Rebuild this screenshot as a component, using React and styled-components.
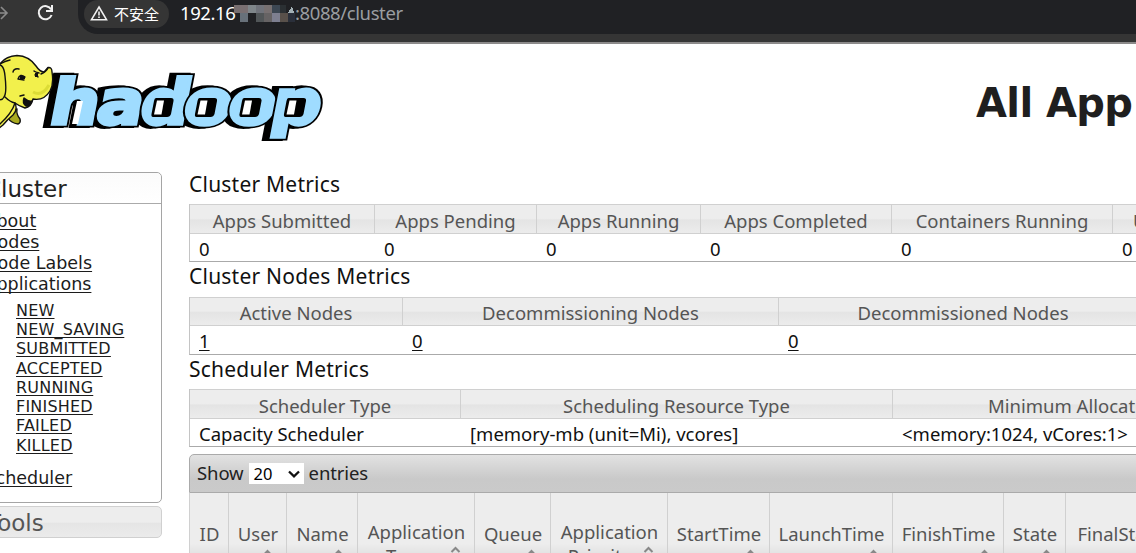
import React from "react";
import styled, { createGlobalStyle } from "styled-components";

const Global = createGlobalStyle`
  * { box-sizing: border-box; }
  html, body { margin: 0; padding: 0; overflow: hidden; background: #fff; }
  body { font-family: "Noto Sans", "Noto Sans CJK SC", sans-serif; color: #1c1c1c; }
`;

const Page = styled.div`
  width: 1136px;
  height: 553px;
  overflow: hidden;
  background: #fff;
`;

const BrowserBar = styled.div`
  display: flex;
  height: 44px;
  background: #353535;
  border-bottom: 2px solid #8c8a8a;
`;

const NavIcons = styled.div`
  width: 78px;
  flex: none;
`;

const AddressBar = styled.div`
  flex: 1;
  display: flex;
  height: 34px;
  padding-left: 6px;
  background: #202124;
  border-radius: 0 0 0 20px;
`;

const SecurityChip = styled.div`
  display: flex;
  width: 85px;
  height: 28px;
  padding: 0 0 0 6px;
  gap: 6px;
  background: #353535;
  border-radius: 14px;
  color: #fff;
  font: 15px/28px "Noto Sans CJK SC", sans-serif;
  white-space: nowrap;
`;

const Url = styled.div`
  display: flex;
  margin-left: 11px;
  font-size: 18.5px;
  line-height: 26px;
  letter-spacing: -0.4px;
  white-space: nowrap;
`;

const Host = styled.span`
  width: 54px;
  color: #fff;
`;

const UrlRest = styled.span`
  color: #9a9da1;
`;

const Banner = styled.header`
  display: flex;
  justify-content: space-between;
  height: 128px;
`;

const Title = styled.h1`
  margin: 0 3px 0 0;
  width: 157px;
  padding-top: 35px;
  font: bold 40px/48px "DejaVu Sans", sans-serif;
  letter-spacing: -0.6px;
  white-space: nowrap;
  overflow: hidden;
  color: #1f1f1f;
`;

const Body = styled.div`
  display: flex;
  gap: 27px;
`;

const Sidebar = styled.nav`
  width: 162px;
  flex: none;
  overflow: hidden;
  font-family: "DejaVu Sans", sans-serif;
`;

const Panel = styled.section`
  width: 202px;
  height: 331px;
  margin-left: -40px;
  border: 1px solid #a5a5a5;
  border-radius: 5px;
`;

const PanelTitle = styled.h3`
  margin: 0;
  height: 31px;
  padding-left: 24px;
  font-weight: normal;
  font-size: 23px;
  line-height: 32px;
  color: #222;
  border-bottom: 1px solid #aaa;
  background: linear-gradient(#fbfbfb, #fff);
  border-radius: 5px 5px 0 0;
`;

const ClosedPanel = styled(PanelTitle)`
  width: 202px;
  height: 32px;
  margin: 3px 0 0 -40px;
  padding-left: 26px;
  border: 1px solid #d0d0d0;
  border-radius: 5px;
  color: #555;
  background: linear-gradient(#ededed 50%, #e5e5e5 55%, #ebebeb);
`;

const Menu = styled.ul`
  list-style: none;
  margin: 0;
  padding: ${(p) => p.$top}px 0 0 ${(p) => p.$indent}px;
`;

const MenuItem = styled.li`
  height: 21.3px;
  line-height: 21px;
  font-size: 17.5px;
  margin-top: ${(p) => p.$gap || 0}px;
  white-space: nowrap;
  text-decoration: underline;
  text-underline-offset: 2px;
  text-decoration-thickness: 1px;
  text-decoration-skip-ink: none;
`;

const SubItem = styled.li`
  height: 19.25px;
  line-height: 19px;
  font-size: 16px;
  letter-spacing: 0.2px;
  text-decoration: underline;
  text-underline-offset: 2px;
  text-decoration-thickness: 1px;
  text-decoration-skip-ink: none;
`;

const Content = styled.main`
  flex: 1;
  min-width: 0;
  overflow: hidden;
`;

const Heading = styled.h2`
  margin: 0;
  height: ${(p) => p.$h}px;
  font-size: 21px;
  font-weight: normal;
  line-height: ${(p) => p.$lh}px;
  letter-spacing: 0.22px;
  color: #111;
`;

const Grid = styled.div`
  display: grid;
  grid-template-columns: ${(p) => p.$cols};
  width: 1100px;
  height: 58px;
  grid-template-rows: ${(p) => p.$head}px 1fr;
  border-left: 1px solid #c4c4c4;
  border-bottom: 1px solid #aaa;
`;

const HeadCell = styled.div`
  display: flex;
  justify-content: ${(p) => (p.$start ? "flex-start" : "center")};
  padding-left: ${(p) => p.$start || 0}px;
  border: solid #d0d0d0;
  border-width: 1px 1px 1px 0;
  background: linear-gradient(#ededed 48%, #e4e4e4 54%, #ececec);
  color: #555;
  font-size: 18.5px;
  line-height: ${(p) => p.$lh}px;
  white-space: nowrap;
`;

const Cell = styled.div`
  padding-left: 9px;
  font-size: 18.5px;
  line-height: 29px;
  color: #111;
  white-space: nowrap;
  text-decoration: ${(p) => (p.$link ? "underline" : "none")};
  text-underline-offset: 2px;
  text-decoration-thickness: 1px;
`;

const Toolbar = styled.div`
  display: flex;
  align-items: center;
  gap: 5px;
  width: 1100px;
  height: 39px;
  margin-top: 7px;
  padding: 0 0 1px 7px;
  border: 1px solid #aaa;
  border-radius: 5px 5px 0 0;
  background: linear-gradient(#e2e2e2, #c9c9c9 65%, #cacaca);
  font-size: 18.5px;
  letter-spacing: -0.1px;
  line-height: 24px;
  color: #222;
`;

const Select = styled.span`
  display: flex;
  align-items: center;
  justify-content: space-between;
  width: 55px;
  height: 21px;
  margin-top: 1px;
  padding: 0 4px 0 5px;
  background: #fff;
  color: #000;
  font: 16.5px/21px "Noto Sans", sans-serif;
`;

const EntryHeader = styled.div`
  display: grid;
  grid-template-columns: 39px 58px 71px 117px 76px 117px 102px 123px 111px 62px 118px;
  height: 110px;
  border-left: 1px solid #d0d0d0;
`;

const EntryCell = styled.div`
  position: relative;
  padding-top: ${(p) => (p.$two ? 26 : 28)}px;
  padding-left: 1px;
  text-align: center;
  color: #555;
  font-size: 18.5px;
  line-height: 26px;
  white-space: nowrap;
  border-right: 1px solid #d0d0d0;
  background: linear-gradient(#ededed 46%, #e4e4e4 54%, #ebebeb);
`;

const TypeLine = styled.div`
  line-height: 22px;
  padding-right: 20px;
`;

const Caret = styled.svg`
  position: absolute;
  right: 13px;
  top: ${(p) => (p.$two ? 53 : 56)}px;
`;

const metrics = [
  { title: "Cluster Metrics", h: 32, lh: 25, head: 30, cols: "185px 162px 164px 191px 221px 176px",
    labels: ["Apps Submitted", "Apps Pending", "Apps Running", "Apps Completed", "Containers Running", "Used Resources"],
    row: ["0", "0", "0", "0", "0", "0"], lastStart: 20 },
  { title: "Cluster Nodes Metrics", h: 35, lh: 29, head: 29, cols: "213px 376px 369px 141px",
    labels: ["Active Nodes", "Decommissioning Nodes", "Decommissioned Nodes", ""],
    row: ["1", "0", "0", ""], link: true },
  { title: "Scheduler Metrics", h: 34, lh: 29, head: 30, cols: "271px 432px 396px",
    labels: ["Scheduler Type", "Scheduling Resource Type", "Minimum Allocation"],
    row: ["Capacity Scheduler", "[memory-mb (unit=Mi), vcores]", "<memory:1024, vCores:1>"], lastStart: 95 },
];

const subItems = ["NEW", "NEW_SAVING", "SUBMITTED", "ACCEPTED", "RUNNING", "FINISHED", "FAILED", "KILLED"];

const entries = ["ID", "User", "Name", "Application|Type", "Queue", "Application|Priority", "StartTime", "LaunchTime", "FinishTime", "State", "FinalStatus"];

const mosaic = [
  [0, 0, 6, 8, "#776e6f"], [6, 0, 8, 8, "#7a7072"], [14, 0, 8, 8, "#7f868a"], [22, 0, 8, 8, "#70737b"],
  [30, 0, 8, 8, "#777071"], [38, 0, 8, 8, "#3c4753"], [46, 0, 6, 8, "#2b3033"], [6, 8, 8, 9, "#68717a"],
  [14, 8, 8, 9, "#202124"], [22, 8, 8, 9, "#515658"], [30, 8, 8, 9, "#666364"], [38, 8, 8, 9, "#7d7f90"],
  [46, 8, 8, 9, "#58504a"], [54, 8, 7, 9, "#2a2f3a"],
];

const letters = [["h", 47], ["a", 94], ["d", 137.5], ["o", 181], ["o", 225.5], ["p", 268.5]];
const counters = [154, 197.5, 242, 286.5];

function HadoopLogo() {
  const glyph = { fontSize: 62, fontFamily: "DejaVu Sans", fontWeight: "bold", strokeLinejoin: "miter" };
  const at = (x) => `translate(${x} 80) skewX(-11) scale(1.12 1)`;
  return (
    <svg width="330" height="110" viewBox="0 0 330 110">
      {letters.map(([c, x], i) => (
        <text key={i} {...glyph} transform={at(x - 5)} fill="#000" stroke="#000" strokeWidth="8">{c}</text>
      ))}
      {letters.map(([c, x], i) => (
        <g key={i}>
          <text {...glyph} transform={at(x)} fill="#000" stroke="#000" strokeWidth="7">{c}</text>
          <text {...glyph} transform={at(x)} fill="#9fdcff" stroke="#9fdcff" strokeWidth="3.500">{c}</text>
        </g>
      ))}
      {counters.map((x) => (
        <g key={x}>
          <path d={`M${x + 2} 54 H${x + 17} Q${x + 20} 54 ${x + 19.500} 57 L${x + 17} 70 Q${x + 16} 73 ${x + 13} 73 H${x - 1} Q${x - 3} 73 ${x - 2.500} 70 L${x} 57 Q${x + 0.500} 54 ${x + 2} 54Z`} fill="#000" />
          <path d={`M${x + 3} 56.500 h7 l-2.500 14 h-7.500z`} fill="#fff" />
        </g>
      ))}
      <path d="M77 57 H83 L78 80 H72Z" fill="#fff" />
      <g stroke="#111" strokeWidth="1.4" strokeLinejoin="round" strokeLinecap="round">
        <path d="M8 74 Q11 79 18 80 Q21 79 20 75 Q16 70 17 65 L13 66Z" fill="#a9aa20" />
        <path d="M-2 23 Q4 12 17 11.500 Q29 12 36 22 Q40 28 44 28 Q47 25 48 23.500 Q52 23 52 28 Q54 40 50 47 Q44 57 33 55 Q31 63 25 64 Q19 62 15 59 Q18 66 13 71 Q7 76 3 81 L-2 85Z" fill="#f2f04c" />
        <path d="M-2 21 Q4 20 5 32 Q7 49 4 53 Q2 57 -2 55" fill="#e6e53e" />
        <path d="M24 54 Q29 58 32 57 Q30 63 26 62 Q22 59 24 54Z" fill="#111" />
        <path d="M5 53 Q10 58 15 59 Q12 69 0 80 M0 20 Q5 17 10 16 M13 28 Q14 24 19 25 M34 27 Q35 28 39 29 M20 52 L24 51 M41 30 Q46 28 48 24" fill="none" />
        <path d="M18 35 Q20 29 25 33 M18 35 L24 36 M35 31 Q37 30 38 33" fill="none" />
      </g>
      <path d="M20 32h5v3h-5z M35 29h3v4h-3z" fill="#111" />
      <path d="M33 48 Q42 53 49 41" stroke="#dcdc36" strokeWidth="3" fill="none" />
    </svg>
  );
}

export default function App() {
  return (
    <Page>
      <Global />
      <BrowserBar>
        <NavIcons>
          <svg width="78" height="40" fill="none">
            <path d="M-4 13H7 M1 7L7 13L1 19" stroke="#8b8b8b" strokeWidth="1.6" />
            <path d="M51.200 9.500A6.600 6.600 0 1 0 51.600 15" stroke="#f1f1f1" strokeWidth="2" />
            <path d="M52 5V11H46" stroke="#f1f1f1" strokeWidth="2" />
          </svg>
        </NavIcons>
        <AddressBar>
          <SecurityChip>
            <svg width="18" height="28" fill="none" stroke="#f1f1f1" strokeWidth="1.6">
              <path d="M9 7L16.500 19.700H1.500Z M9 11.500V15.500 M9 16.500V18" />
            </svg>
            不安全
          </SecurityChip>
          <Url>
            <Host>192.16</Host>
            <svg width="61" height="28" shapeRendering="crispEdges">
              {mosaic.map(([x, y, w, h, c], i) => <rect key={i} x={x} y={y + 5} width={w} height={h} fill={c} />)}
              <path d="M54 13L58 6L60 13Z" fill="#a3b1b6" />
            </svg>
            <UrlRest>:8088/cluster</UrlRest>
          </Url>
        </AddressBar>
      </BrowserBar>
      <Banner>
        <HadoopLogo />
        <Title>All Applications</Title>
      </Banner>
      <Body>
        <Sidebar>
          <Panel>
            <PanelTitle>Cluster</PanelTitle>
            <Menu $indent={23.5} $top={6.5}>
              <MenuItem>About</MenuItem>
              <MenuItem>Nodes</MenuItem>
              <MenuItem>Node Labels</MenuItem>
              <MenuItem>Applications</MenuItem>
              <Menu $indent={31.5} $top={5.3}>
                {subItems.map((s) => <SubItem key={s}>{s}</SubItem>)}
              </Menu>
              <MenuItem $gap={13}>Scheduler</MenuItem>
            </Menu>
          </Panel>
          <ClosedPanel as="h3">Tools</ClosedPanel>
        </Sidebar>
        <Content>
          {metrics.map((m) => (
            <React.Fragment key={m.title}>
              <Heading $h={m.h} $lh={m.lh}>{m.title}</Heading>
              <Grid $cols={m.cols} $head={m.head}>
                {m.labels.map((t, i) => (
                  <HeadCell key={i} $lh={m.link ? 30 : 32} $start={i === m.labels.length - 1 ? m.lastStart : 0}>{t}</HeadCell>
                ))}
                {m.row.map((t, i) => <Cell key={i} $link={m.link}>{t}</Cell>)}
              </Grid>
            </React.Fragment>
          ))}
          <Toolbar>
            Show
            <Select>
              20
              <svg width="12" height="8" fill="none"><path d="M1 1.500L6 6.300L11 1.500" stroke="#111" strokeWidth="2.300" /></svg>
            </Select>
            entries
          </Toolbar>
          <EntryHeader>
            {entries.map((e, i) => {
              const [a, b] = e.split("|");
              return (
                <EntryCell key={i} $two={b}>
                  {a}
                  {b && <TypeLine>{b}</TypeLine>}
                  {i > 0 && i < 10 && (
                    <Caret $two={b} width="11" height="8" fill="none"><path d="M1.500 6L5.500 2L9.500 6" stroke="#888" strokeWidth="2" /></Caret>
                  )}
                </EntryCell>
              );
            })}
          </EntryHeader>
        </Content>
      </Body>
    </Page>
  );
}
